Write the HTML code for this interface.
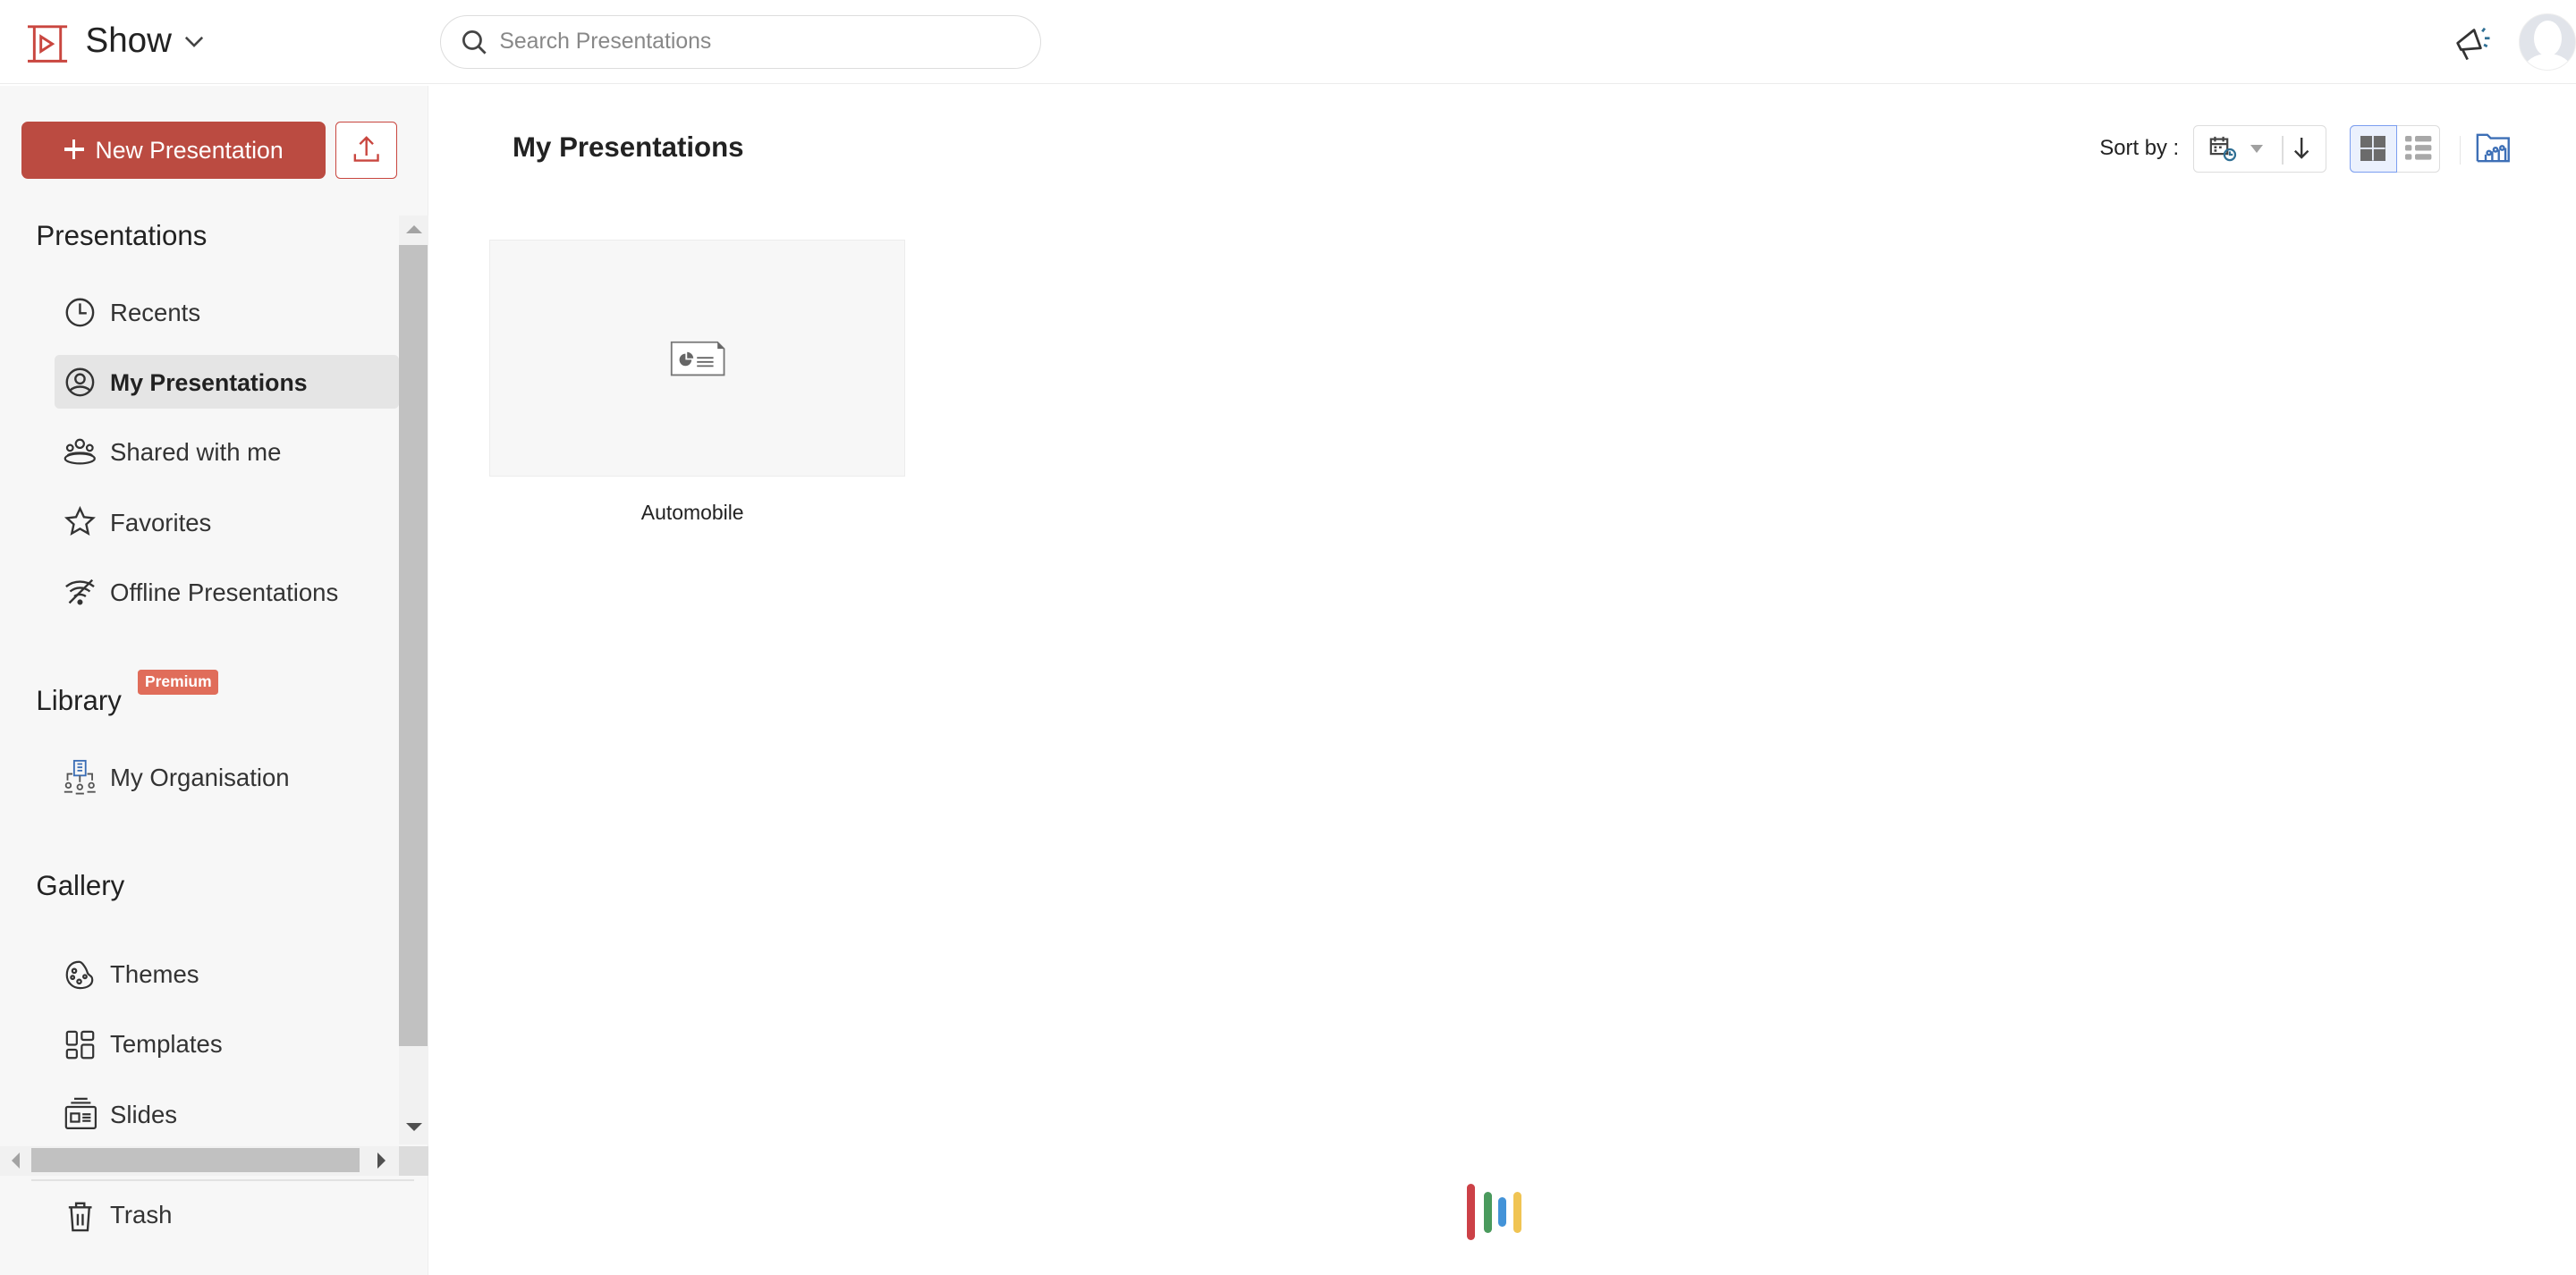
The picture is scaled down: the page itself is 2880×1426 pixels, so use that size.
<!DOCTYPE html>
<html><head><meta charset="utf-8"><style>
*{margin:0;padding:0;box-sizing:border-box}
html,body{width:2880px;height:1426px;overflow:hidden;background:#fff}
#w{zoom:1.83673;width:1568px;height:776.4px;position:relative;font-family:"Liberation Sans",sans-serif;color:#222}
.a{position:absolute}
.t{font-size:15px;color:#333}
svg{position:absolute;overflow:visible}
</style></head><body><div id="w">
<!-- header -->
<div class="a" style="left:0;top:0;width:1568px;height:51px;border-bottom:1px solid #ececec"></div>
<svg style="left:17px;top:15px" width="26" height="24" viewBox="0 0 26 24" fill="none" stroke="#c9463f" stroke-width="1.6"><path d="M0 1h24M0 22h24M4 1v21M20 1v21"/><path d="M8 7l7 4.5-7 4.5z"/></svg>
<div class="a" style="left:52px;top:13px;font-size:21px;color:#222">Show</div>
<svg style="left:112px;top:22px" width="12" height="8" viewBox="0 0 12 8" fill="none" stroke="#444" stroke-width="1.4"><path d="M1 1l5 5 5-5"/></svg>
<div class="a" style="left:268px;top:9px;width:366px;height:33px;border:1px solid #ddd;border-radius:17px"></div>
<svg style="left:281px;top:18px" width="16" height="16" viewBox="0 0 16 16" fill="none" stroke="#444" stroke-width="1.5"><circle cx="6.5" cy="6.5" r="5.2"/><path d="M10.5 10.5l4 4"/></svg>
<div class="a" style="left:304px;top:18px;font-size:13.5px;color:#888">Search Presentations</div>
<svg style="left:1494px;top:15px" width="24" height="22" viewBox="0 0 24 22" fill="none" stroke="#333" stroke-width="1.5" stroke-linejoin="round"><path d="M2 11l2 4 12-1-4-11z"/><path d="M5 15l3 6"/><path d="M17 4l1.5-2M18.5 8h3M18 12l2 1" stroke="#2f6f94"/></svg>
<div class="a" style="left:1533px;top:8px;width:35px;height:35px;border-radius:50%;background:#e1e4ea;border:1px solid #eee;overflow:hidden"><div class="a" style="left:9px;top:4px;width:17px;height:22px;border-radius:50%;background:#fff"></div><div class="a" style="left:3px;top:24px;width:29px;height:20px;border-radius:50%;background:#fff"></div></div>
<!-- sidebar -->
<div class="a" style="left:0;top:52px;width:261px;height:725px;background:#f7f7f7;border-right:1px solid #eee"></div>
<div class="a" style="left:13px;top:74px;width:185px;height:35px;background:#bb4b41;border-radius:4px;color:#fff;font-size:14.5px;line-height:35px;padding-left:45px">New Presentation</div>
<div class="a" style="left:39px;top:84px;width:12px;height:2px;background:#fff;top:90px"></div>
<div class="a" style="left:44px;top:85px;width:2px;height:12px;background:#fff"></div>
<div class="a" style="left:204px;top:74px;width:38px;height:35px;border:1px solid #c9463f;border-radius:3px;background:#fff"></div>
<svg style="left:215px;top:83px" width="16" height="16" viewBox="0 0 16 16" fill="none" stroke="#c9463f" stroke-width="1.3"><path d="M8 12V1M4 5l4-4 4 4M1 11v4h14v-4"/></svg>
<div class="a" style="left:22px;top:134px;font-size:17px;color:#222">Presentations</div>
<div class="a" style="left:33px;top:216px;width:210px;height:33px;background:#e5e5e5;border-radius:3px"></div>
<svg style="left:39px;top:181px" width="19" height="19" viewBox="0 0 19 19" fill="none" stroke="#333" stroke-width="1.3"><circle cx="9.5" cy="9.5" r="8"/><path d="M9.5 4v6h4"/></svg>
<div class="a t" style="left:67px;top:182px">Recents</div>
<svg style="left:39px;top:223px" width="19" height="19" viewBox="0 0 19 19" fill="none" stroke="#333" stroke-width="1.3"><circle cx="9.5" cy="9.5" r="8"/><circle cx="9.5" cy="7.5" r="2.8"/><path d="M3.5 14.5c3-3 9-3 12 0"/></svg>
<div class="a t" style="left:67px;top:225px;font-weight:bold;color:#222;font-size:14.5px">My Presentations</div>
<svg style="left:38px;top:266px" width="21" height="18" viewBox="0 0 21 18" fill="none" stroke="#333" stroke-width="1.2"><circle cx="10.5" cy="4" r="2.5"/><circle cx="4.5" cy="6.5" r="1.8"/><circle cx="16.5" cy="6.5" r="1.8"/><ellipse cx="10.5" cy="13" rx="9" ry="3"/><path d="M3 11c3-2 12-2 15 0"/></svg>
<div class="a t" style="left:67px;top:267px">Shared with me</div>
<svg style="left:39px;top:308px" width="19" height="19" viewBox="0 0 19 19" fill="none" stroke="#333" stroke-width="1.3"><path d="M9.5 1.5l2.4 5.2 5.6.6-4.2 3.8 1.2 5.6-5-2.9-5 2.9 1.2-5.6L1.5 7.3l5.6-.6z"/></svg>
<div class="a t" style="left:67px;top:310px">Favorites</div>
<svg style="left:39px;top:351px" width="19" height="18" viewBox="0 0 19 18" fill="none" stroke="#333" stroke-width="1.3"><path d="M1 6c5-4 12-4 17 0M3.5 9c3.5-3 8.5-3 12 0M6 12c2-1.5 5-1.5 7 0"/><path d="M3 16L17 2"/><circle cx="9.5" cy="15.5" r="1" fill="#333"/></svg>
<div class="a t" style="left:67px;top:352px">Offline Presentations</div>
<div class="a" style="left:22px;top:417px;font-size:17px">Library</div>
<div class="a" style="left:84px;top:408px;width:49px;height:15px;background:#e06d5a;border-radius:2px;color:#fff;font-size:9.5px;font-weight:bold;text-align:center;line-height:15px">Premium</div>
<svg style="left:38px;top:462px" width="21" height="22" viewBox="0 0 21 22" fill="none" stroke="#555" stroke-width="1"><rect x="7" y="1" width="7" height="9" stroke="#3a6db5"/><path d="M9 3h3M9 5h3M9 7h3" stroke="#3a6db5"/><path d="M3 13V9h3M18 13V9h-3M10.5 10v4"/><circle cx="3.5" cy="16" r="1.5"/><circle cx="10.5" cy="17" r="1.5"/><circle cx="17.5" cy="16" r="1.5"/><path d="M1 20h5M8 21h5M15 20h5"/></svg>
<div class="a t" style="left:67px;top:465px">My Organisation</div>
<div class="a" style="left:22px;top:530px;font-size:17px">Gallery</div>
<svg style="left:39px;top:584px" width="19" height="19" viewBox="0 0 19 19" fill="none" stroke="#333" stroke-width="1.2"><path d="M9 1.5C4 1.5 1.5 5 1.5 9.5S5 17.5 9.5 17.5s7.5-2 7.5-5-2.5-2.5-3-4.5S11 1.5 9 1.5z"/><circle cx="6" cy="7" r="1.2"/><circle cx="5" cy="11" r="1"/><circle cx="9" cy="13.5" r="1.2"/><circle cx="12.5" cy="10.5" r="1"/></svg>
<div class="a t" style="left:67px;top:585px">Themes</div>
<svg style="left:40px;top:627px" width="18" height="18" viewBox="0 0 18 18" fill="none" stroke="#333" stroke-width="1.2"><rect x="1" y="1" width="6" height="8" rx="1"/><rect x="10" y="1" width="7" height="5" rx="1"/><rect x="1" y="12" width="6" height="5" rx="1"/><rect x="10" y="9" width="7" height="8" rx="1"/></svg>
<div class="a t" style="left:67px;top:627px">Templates</div>
<svg style="left:39px;top:668px" width="20" height="20" viewBox="0 0 20 20" fill="none" stroke="#333" stroke-width="1.2"><path d="M6 1h8M4 3.5h12"/><rect x="1" y="6" width="18" height="13" rx="1"/><rect x="4" y="10" width="5" height="5"/><path d="M11 10.5h5M11 12.5h5M11 14.5h5"/></svg>
<div class="a t" style="left:67px;top:670px">Slides</div>
<!-- scrollbars -->
<div class="a" style="left:243px;top:131px;width:18px;height:566px;background:#f1f1f1"></div>
<div class="a" style="left:243px;top:149px;width:17px;height:488px;background:#c1c1c1"></div>
<div class="a" style="left:247px;top:137px;width:0;height:0;border:5px solid transparent;border-bottom:5px solid #a3a3a3;border-top:0"></div>
<div class="a" style="left:247px;top:684px;width:0;height:0;border:5px solid transparent;border-top:5px solid #505050;border-bottom:0"></div>
<div class="a" style="left:0;top:698px;width:261px;height:18px;background:#f1f1f1"></div>
<div class="a" style="left:243px;top:698px;width:18px;height:18px;background:#dcdcdc"></div>
<div class="a" style="left:19px;top:699px;width:200px;height:15px;background:#c1c1c1"></div>
<div class="a" style="left:7px;top:702px;border:5px solid transparent;border-right:5px solid #a3a3a3;border-left:0"></div>
<div class="a" style="left:230px;top:702px;border:5px solid transparent;border-left:5px solid #505050;border-right:0"></div>
<div class="a" style="left:19px;top:718px;width:233px;height:1px;background:#e2e2e2"></div>
<svg style="left:41px;top:731px" width="16" height="19" viewBox="0 0 16 19" fill="none" stroke="#333" stroke-width="1.3"><path d="M1 4h14M5.5 4V1.5h5V4M2.5 4l1 14h9l1-14M6.5 8v7M9.5 8v7"/></svg>
<div class="a t" style="left:67px;top:731px">Trash</div>
<!-- main -->
<div class="a" style="left:312px;top:80px;font-size:17px;font-weight:bold;color:#222">My Presentations</div>
<div class="a" style="left:1278px;top:83px;font-size:13px;color:#222">Sort by :</div>
<div class="a" style="left:1335px;top:76px;width:81px;height:29px;border:1px solid #ddd;border-radius:3px"></div>
<svg style="left:1345px;top:82px" width="18" height="17" viewBox="0 0 18 17" fill="none" stroke="#444" stroke-width="1.2"><rect x="1" y="2.5" width="10" height="9"/><path d="M3.5 1v3M8.5 1v3M1 5.5h10"/><path d="M3 7.5h1.5M6 7.5h1.5M3 9.5h1.5" stroke-width="1.4"/><circle cx="12.5" cy="12" r="3.3" stroke="#2f6f94"/><path d="M12.5 10v2h1.8" stroke="#2f6f94"/></svg>
<div class="a" style="left:1370px;top:88px;border:4px solid transparent;border-top:5px solid #a0a0a0;border-bottom:0"></div>
<div class="a" style="left:1389px;top:83px;width:1px;height:17px;background:#ddd"></div>
<svg style="left:1396px;top:84px" width="10" height="14" viewBox="0 0 10 14" fill="none" stroke="#333" stroke-width="1.3"><path d="M5 0v12M1 8l4 4 4-4"/></svg>
<div class="a" style="left:1430px;top:76px;width:55px;height:29px;border:1px solid #ddd;border-radius:3px"></div>
<div class="a" style="left:1430px;top:76px;width:29px;height:29px;border:1px solid #7b9ef0;border-radius:3px 0 0 3px;background:#ebf1fd"></div>
<div class="a" style="left:1437px;top:83px;width:15px;height:15px;background:linear-gradient(#ebf1fd,#ebf1fd) 7px 0/1px 15px no-repeat,linear-gradient(#ebf1fd,#ebf1fd) 0 7px/15px 1px no-repeat,#6b6b6b"></div>
<svg style="left:1464px;top:83px" width="16" height="15" viewBox="0 0 16 15" fill="#a8a8a8"><rect x="0" y="0" width="4" height="3.5" rx="1"/><rect x="6" y="0" width="10" height="3.5" rx="1"/><rect x="0" y="5.5" width="4" height="3.5" rx="1"/><rect x="6" y="5.5" width="10" height="3.5" rx="1"/><rect x="0" y="11" width="4" height="3.5" rx="1"/><rect x="6" y="11" width="10" height="3.5" rx="1"/></svg>
<div class="a" style="left:1497px;top:83px;width:1px;height:17px;background:#e5e5e5"></div>
<svg style="left:1507px;top:81px" width="22" height="18" viewBox="0 0 22 18" fill="none" stroke="#3d6fb6" stroke-width="1.3"><path d="M1 17V1h6l2 2h11v14H1"/><path d="M6 17v-4M10 17v-6M14 17v-7M18 17v-8"/><circle cx="8" cy="12" r="1.2"/><circle cx="12" cy="10" r="1.2"/><circle cx="16" cy="9" r="1.2"/></svg>
<div class="a" style="left:298px;top:146px;width:253px;height:144px;background:#f7f7f7;border:1px solid #ececec"></div>
<svg style="left:407px;top:207px" width="35" height="23" viewBox="0 0 35 23" fill="none"><path d="M1.5 1.5h28l4 4v16h-32z" stroke="#777" stroke-width="1" fill="#fff"/><path d="M29.5 1.5l4 4h-4z" fill="#666"/><path d="M10 8.5a3.7 3.7 0 1 0 3.7 3.7H10z" fill="#666"/><path d="M11 7.5a4 4 0 0 1 3.8 3.8H11z" fill="#666"/><path d="M17 11h10M17 13.5h10M17 16h10" stroke="#666" stroke-width="1"/></svg>
<div class="a" style="left:298px;top:305px;width:247px;text-align:center;font-size:12.5px;color:#222">Automobile</div>
<!-- loader -->
<div class="a" style="left:893px;top:721px;width:5px;height:34px;border-radius:3px;background:#cc4147"></div>
<div class="a" style="left:903px;top:726px;width:5px;height:25px;border-radius:3px;background:#4a9a5d"></div>
<div class="a" style="left:912px;top:729px;width:5px;height:18px;border-radius:3px;background:#4393d8"></div>
<div class="a" style="left:921px;top:726px;width:5px;height:25px;border-radius:3px;background:#f0c453"></div>
</div></body></html>
